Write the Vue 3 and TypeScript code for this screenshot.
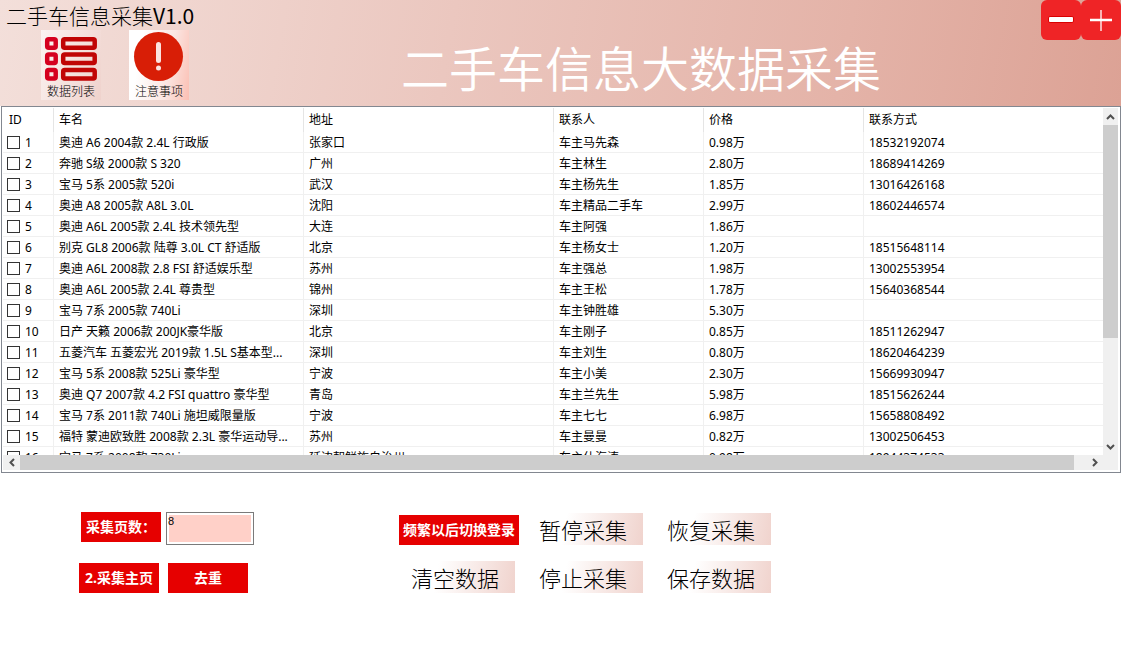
<script setup lang="ts">
import { ref } from 'vue'

interface Car {
  id: number
  name: string
  city: string
  contact: string
  price: string
  phone: string
}

const columns = ['ID', '车名', '地址', '联系人', '价格', '联系方式']

const cars: Car[] = [
  { id: 1, name: '奥迪 A6 2004款 2.4L 行政版', city: '张家口', contact: '车主马先森', price: '0.98万', phone: '18532192074' },
  { id: 2, name: '奔驰 S级 2000款 S 320', city: '广州', contact: '车主林生', price: '2.80万', phone: '18689414269' },
  { id: 3, name: '宝马 5系 2005款 520i', city: '武汉', contact: '车主杨先生', price: '1.85万', phone: '13016426168' },
  { id: 4, name: '奥迪 A8 2005款 A8L 3.0L', city: '沈阳', contact: '车主精品二手车', price: '2.99万', phone: '18602446574' },
  { id: 5, name: '奥迪 A6L 2005款 2.4L 技术领先型', city: '大连', contact: '车主阿强', price: '1.86万', phone: '' },
  { id: 6, name: '别克 GL8 2006款 陆尊 3.0L CT 舒适版', city: '北京', contact: '车主杨女士', price: '1.20万', phone: '18515648114' },
  { id: 7, name: '奥迪 A6L 2008款 2.8 FSI 舒适娱乐型', city: '苏州', contact: '车主强总', price: '1.98万', phone: '13002553954' },
  { id: 8, name: '奥迪 A6L 2005款 2.4L 尊贵型', city: '锦州', contact: '车主王松', price: '1.78万', phone: '15640368544' },
  { id: 9, name: '宝马 7系 2005款 740Li', city: '深圳', contact: '车主钟胜雄', price: '5.30万', phone: '' },
  { id: 10, name: '日产 天籁 2006款 200JK豪华版', city: '北京', contact: '车主刚子', price: '0.85万', phone: '18511262947' },
  { id: 11, name: '五菱汽车 五菱宏光 2019款 1.5L S基本型...', city: '深圳', contact: '车主刘生', price: '0.80万', phone: '18620464239' },
  { id: 12, name: '宝马 5系 2008款 525Li 豪华型', city: '宁波', contact: '车主小美', price: '2.30万', phone: '15669930947' },
  { id: 13, name: '奥迪 Q7 2007款 4.2 FSI quattro 豪华型', city: '青岛', contact: '车主兰先生', price: '5.98万', phone: '18515626244' },
  { id: 14, name: '宝马 7系 2011款 740Li 施坦威限量版', city: '宁波', contact: '车主七七', price: '6.98万', phone: '15658808492' },
  { id: 15, name: '福特 蒙迪欧致胜 2008款 2.3L 豪华运动导...', city: '苏州', contact: '车主曼曼', price: '0.82万', phone: '13002506453' },
  { id: 16, name: '宝马 7系 2008款 730Li', city: '延边朝鲜族自治州', contact: '车主仕海涛', price: '0.98万', phone: '18944374533' },
]

const pages = ref('8')
const selected = ref<number[]>([])
const actions = ['暂停采集', '恢复采集', '清空数据', '停止采集', '保存数据']
</script>

<template>
  <main class="window">
    <header class="banner">
      <div class="left">
        <div class="app-name">二手车信息采集<span>V1.0</span></div>
        <nav class="tools">
          <button class="tool list" type="button">
            <svg width="60" height="52" viewBox="0 0 60 52" fill="none" stroke-width="4.5" aria-hidden="true">
              <g stroke="#d5001f">
                <rect x="6.2" y="9.2" width="8.500" height="8.500" rx="1.500" />
                <rect x="6.2" y="24.5" width="8.500" height="8.500" rx="1.500" />
                <rect x="6.2" y="40" width="8.500" height="8.500" rx="1.500" />
              </g>
              <g stroke="#c00505">
                <rect x="22.2" y="9.2" width="31.500" height="8.500" rx="1.500" />
                <rect x="22.2" y="24.5" width="31.500" height="8.500" rx="1.500" />
                <rect x="22.2" y="40" width="31.500" height="8.500" rx="1.500" />
              </g>
            </svg>
            <span>数据列表</span>
          </button>
          <button class="tool notice" type="button">
            <svg width="60" height="52" viewBox="0 0 60 52" aria-hidden="true">
              <circle cx="29.500" cy="26.500" r="24.500" fill="#d81e06" />
              <rect x="27" y="12" width="5" height="21" rx="2.500" fill="#fbe3df" />
              <circle cx="29.500" cy="38" r="2.500" fill="#fbe3df" />
            </svg>
            <span>注意事项</span>
          </button>
        </nav>
      </div>
      <h1>二手车信息大数据采集</h1>
      <div class="controls">
        <button type="button" aria-label="最小化">
          <svg width="40" height="40" viewBox="0 0 40 40" aria-hidden="true">
            <rect x="7" y="16" width="26" height="7" rx="3" fill="#d90000" />
            <rect x="8" y="17" width="24" height="5" rx="1" fill="#fff" />
          </svg>
        </button>
        <button type="button" aria-label="最大化">
          <svg width="40" height="40" viewBox="0 0 40 40" aria-hidden="true">
            <path d="M20 10V31" stroke="#f9b3b3" stroke-width="2" />
            <path d="M9 20H31" stroke="#fff" stroke-width="2.500" />
          </svg>
        </button>
      </div>
    </header>

    <section class="grid">
      <div class="view">
        <table>
          <colgroup>
            <col class="c-id" /><col class="c-wide" /><col class="c-wide" /><col class="c-contact" /><col class="c-price" /><col />
          </colgroup>
          <thead>
            <tr><th v-for="c in columns" :key="c" scope="col">{{ c }}</th></tr>
          </thead>
          <tbody>
            <tr v-for="car in cars" :key="car.id">
              <td class="id">
                <label><input v-model="selected" type="checkbox" :value="car.id" /><span>{{ car.id }}</span></label>
              </td>
              <td>{{ car.name }}</td>
              <td>{{ car.city }}</td>
              <td>{{ car.contact }}</td>
              <td>{{ car.price }}</td>
              <td>{{ car.phone }}</td>
            </tr>
          </tbody>
        </table>
      </div>
      <div class="bar vertical">
        <button type="button" aria-label="向上滚动">
          <svg width="9" height="8" viewBox="0 0 9 8" aria-hidden="true"><path d="M1 6L4.500 2.500L8 6" /></svg>
        </button>
        <div class="thumb"></div>
        <div class="track"></div>
        <button type="button" aria-label="向下滚动">
          <svg width="9" height="8" viewBox="0 0 9 8" aria-hidden="true"><path d="M1 2L4.500 5.500L8 2" /></svg>
        </button>
      </div>
      <div class="bar horizontal">
        <button type="button" aria-label="向左滚动">
          <svg width="8" height="9" viewBox="0 0 8 9" aria-hidden="true"><path d="M6 1L2.500 4.500L6 8" /></svg>
        </button>
        <div class="thumb"></div>
        <div class="track"></div>
        <button type="button" aria-label="向右滚动">
          <svg width="8" height="9" viewBox="0 0 8 9" aria-hidden="true"><path d="M2 1L5.500 4.500L2 8" /></svg>
        </button>
      </div>
      <div class="corner"></div>
    </section>

    <section class="panel">
      <form class="collect" @submit.prevent>
        <div class="pair field">
          <label class="red" for="pages">采集页数：</label>
          <input id="pages" v-model="pages" type="text" />
        </div>
        <div class="pair">
          <button class="red" type="button">2.采集主页</button>
          <button class="red" type="button">去重</button>
        </div>
      </form>
      <div class="actions">
        <button class="red" type="button">频繁以后切换登录</button>
        <button v-for="a in actions" :key="a" class="soft" type="button">{{ a }}</button>
      </div>
    </section>
  </main>
</template>

<style>
body {
  margin: 0;
  background: #fff;
}
</style>

<style scoped>
* {
  box-sizing: border-box;
}

.window {
  font-family: "Noto Sans", "Noto Sans CJK SC", sans-serif;
  font-size: 12px;
  color: #000;
}

button {
  border: 0;
  padding: 0;
  font: inherit;
  color: inherit;
}

.banner {
  display: grid;
  grid-template-columns: 1fr auto 240px;
  height: 106px;
  background: linear-gradient(100deg, #f3dfda 0%, #ebc7bf 40%, #e4b3a8 75%, #dca295 100%);
  font-family: KaiTi, "Noto Sans CJK SC", sans-serif;
  font-weight: 300;
}

.app-name {
  padding-left: 6px;
  font-size: 21px;
  line-height: 30px;
  white-space: nowrap;
}

.app-name span {
  font-weight: 400;
}

.tools {
  display: flex;
  gap: 28px;
  padding-left: 41px;
}

.tool {
  display: flex;
  flex-direction: column;
  align-items: center;
  width: 60px;
  height: 70px;
  font-size: 12px;
  line-height: 18px;
}

.list {
  background: linear-gradient(110deg, #fbf3f1, #efd2cc);
}

.notice {
  background: linear-gradient(100deg, #fff 20%, #fbe5e1 65%, #fbbfb3);
}

h1 {
  margin: 0;
  padding-top: 30px;
  font-size: 48px;
  line-height: 72px;
  font-weight: 350;
  color: #fff;
  white-space: nowrap;
}

.controls {
  display: flex;
  justify-content: flex-end;
  align-items: flex-start;
}

.controls button {
  width: 40px;
  height: 40px;
  border-radius: 6px;
  background: #ef2426;
}

.controls svg,
.bar svg {
  display: block;
}

.grid {
  display: grid;
  grid-template-columns: minmax(0, 1fr) 15px;
  grid-template-rows: 347px 15px;
  margin-left: 1px;
  padding: 1px 2px 2px 1px;
  border: 1px solid #828790;
}

.view {
  overflow: hidden;
}

table {
  width: 100%;
  table-layout: fixed;
  border-collapse: separate;
  border-spacing: 0;
}

.c-id {
  width: 51px;
}

.c-wide {
  width: 250px;
}

.c-contact {
  width: 150px;
}

.c-price {
  width: 160px;
}

th,
td {
  padding: 0 5px;
  border-right: 1px solid #f0f0f0;
  font-weight: 400;
  text-align: left;
  white-space: nowrap;
  overflow: hidden;
}

th {
  height: 24px;
  border-color: #e5e5e5;
  line-height: 20px;
}

th:first-child {
  padding-left: 6px;
}

td {
  height: 21px;
  padding-top: 2px;
  border-bottom: 1px solid #f0f0f0;
  line-height: 18px;
}

th:last-child,
td:last-child {
  border-right: 0;
}

.id {
  padding: 0 0 0 4px;
}

.id label {
  display: flex;
  align-items: center;
  gap: 5px;
  height: 20px;
}

.id span {
  padding-top: 2px;
}

.id input {
  appearance: none;
  width: 13px;
  height: 13px;
  margin: 0;
  border: 1px solid #333;
  background: #fff;
}

.id input:checked {
  background: #333;
}

.bar {
  display: flex;
  background: #f0f0f0;
}

.bar button {
  display: flex;
  flex: none;
  align-items: center;
  justify-content: center;
  width: 17px;
  background: #f0f0f0;
}

.bar path {
  fill: none;
  stroke: #505050;
  stroke-width: 2;
}

.vertical {
  flex-direction: column;
}

.vertical button {
  width: 15px;
  height: 17px;
}

.thumb {
  background: #cdcdcd;
}

.vertical .thumb {
  flex: 213;
}

.vertical .track {
  flex: 100;
}

.horizontal .thumb {
  flex: 1054;
}

.horizontal .track {
  flex: 12;
}

.corner {
  background: #f0f0f0;
}

.panel {
  display: flex;
  gap: 141px;
  padding: 39px 24px 24px 79px;
}

.collect {
  display: grid;
  gap: 18px;
  align-content: start;
}

.pair {
  display: flex;
  gap: 9px;
}

.field {
  gap: 5px;
  padding-left: 2px;
}

.red {
  display: block;
  width: 80px;
  height: 30px;
  background: #e60000;
  color: #fff;
  font-size: 14px;
  line-height: 30px;
  font-weight: 700;
  text-align: center;
  white-space: nowrap;
}

.pair input {
  width: 88px;
  height: 33px;
  padding: 0 0 15px 1px;
  border: 1px solid #7a7a7a;
  outline: 0;
  background: #ffd0c8;
  box-shadow: inset 0 0 0 2px #fff;
  font-family: "Liberation Sans", sans-serif;
  font-size: 11px;
}

.actions {
  display: grid;
  grid-template-columns: repeat(3, 120px);
  gap: 16px 8px;
  align-content: start;
  align-items: end;
  padding-top: 1px;
}

.actions .red {
  width: 120px;
  margin-left: 4px;
}

.soft {
  height: 32px;
  background: linear-gradient(100deg, #fff 35%, #f0d3cd);
  font-family: KaiTi, "Noto Sans CJK SC", sans-serif;
  font-size: 22px;
  line-height: 32px;
  font-weight: 300;
}
</style>
